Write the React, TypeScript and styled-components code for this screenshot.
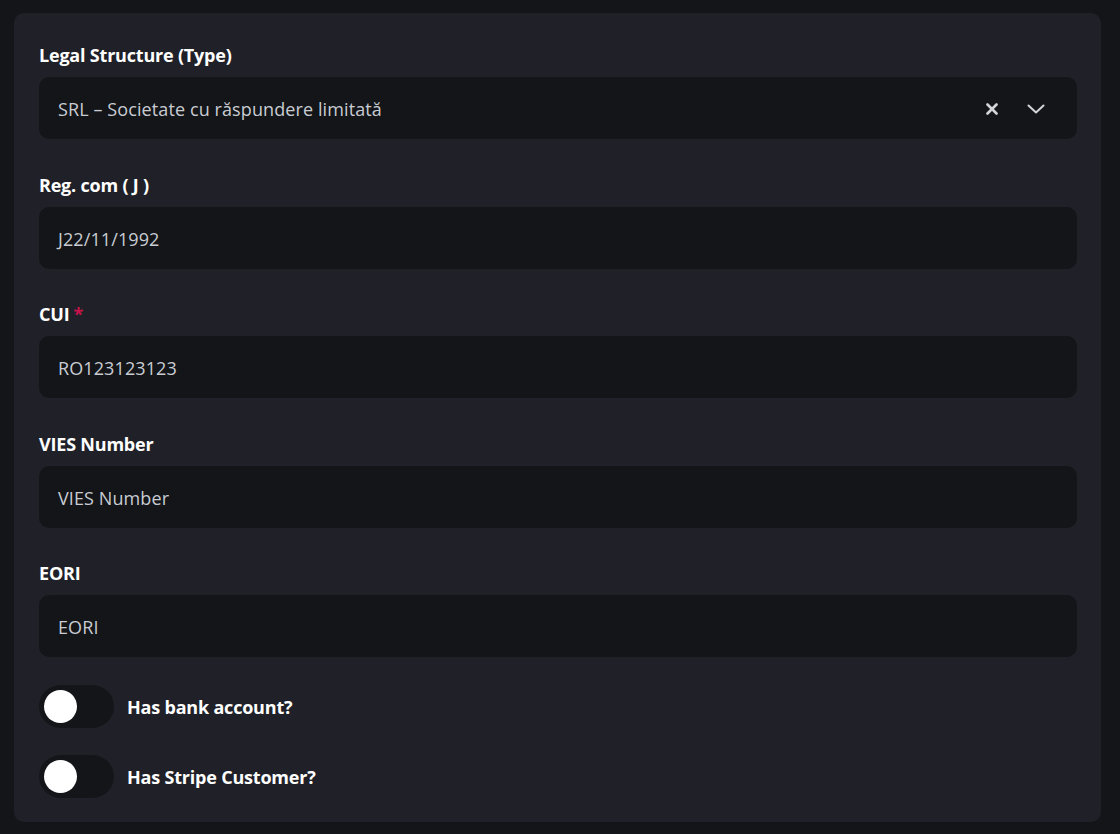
import React from "react";
import styled, { createGlobalStyle } from "styled-components";

const Global = createGlobalStyle`
  html, body { margin: 0; padding: 0; background: #131518; }
  body { font-family: "Open Sans", "Noto Sans", sans-serif; }
  * { box-sizing: border-box; }
`;

const Page = styled.div`
  width: 1120px;
  height: 834px;
  padding: 13px 19px 12px 14px;
  background: #131518;
`;

const Card = styled.div`
  background: #202128;
  border-radius: 10px;
  padding: 28px 24px 24px 25px;
  display: flex;
  flex-direction: column;
  gap: 28px;
`;

const Fields = styled.div`
  display: flex;
  flex-direction: column;
  gap: 31.5px;
`;

const Field = styled.div`
  display: flex;
  flex-direction: column;
  gap: 8px;
`;

const Label = styled.label`
  font-size: 18px;
  font-weight: 700;
  color: #ffffff;
  line-height: 28px;
  letter-spacing: -0.2px;
`;

const Star = styled.span`
  color: #c8134a;
  margin-left: 4px;
`;

const InputBox = styled.div`
  height: 62px;
  background: #131518;
  border-radius: 10px;
  display: flex;
  align-items: center;
  padding: 2px 19px 0;
`;

const Value = styled.span`
  flex: 1;
  font-size: 18px;
  color: #c9ccd3;
  letter-spacing: 0.1px;
`;

const Icons = styled.div`
  display: flex;
  align-items: center;
  gap: 29px;
  padding-right: 13px;
  color: #d4d5d9;
`;

const Toggles = styled.div`
  display: flex;
  flex-direction: column;
  gap: 27px;
`;

const ToggleRow = styled.div`
  display: flex;
  align-items: center;
  gap: 13px;
`;

const Track = styled.div`
  width: 75px;
  height: 43px;
  border-radius: 22px;
  background: #131518;
  display: flex;
  align-items: center;
  padding-left: 5px;
`;

const Knob = styled.div`
  width: 33px;
  height: 33px;
  border-radius: 50%;
  background: #ffffff;
`;

const ToggleText = styled.span`
  font-size: 18px;
  font-weight: 700;
  color: #ffffff;
  letter-spacing: -0.2px;
`;

const fields: { label: string; value: string; required?: boolean; select?: boolean }[] = [
  { label: "Legal Structure (Type)", value: "SRL – Societate cu răspundere limitată", select: true },
  { label: "Reg. com ( J )", value: "J22/11/1992" },
  { label: "CUI", value: "RO123123123", required: true },
  { label: "VIES Number", value: "VIES Number" },
  { label: "EORI", value: "EORI" },
];

export default function App() {
  return (
    <Page>
      <Global />
      <Card>
        <Fields>
          {fields.map((f) => (
            <Field key={f.label}>
              <Label>
                {f.label}
                {f.required && <Star>*</Star>}
              </Label>
              <InputBox>
                <Value>{f.value}</Value>
                {f.select && (
                  <Icons>
                    <svg width="12" height="12" viewBox="0 0 12 12">
                      <path d="M1.5 1.5 L10.5 10.5 M10.5 1.5 L1.5 10.5" stroke="currentColor" strokeWidth="2.6" strokeLinecap="round" />
                    </svg>
                    <svg width="18" height="10" viewBox="0 0 18 10">
                      <path d="M1.5 1.5 L9 8.5 L16.5 1.5" stroke="currentColor" strokeWidth="2" fill="none" strokeLinecap="round" strokeLinejoin="round" />
                    </svg>
                  </Icons>
                )}
              </InputBox>
            </Field>
          ))}
        </Fields>
        <Toggles>
          <ToggleRow>
            <Track><Knob /></Track>
            <ToggleText>Has bank account?</ToggleText>
          </ToggleRow>
          <ToggleRow>
            <Track><Knob /></Track>
            <ToggleText>Has Stripe Customer?</ToggleText>
          </ToggleRow>
        </Toggles>
      </Card>
    </Page>
  );
}
